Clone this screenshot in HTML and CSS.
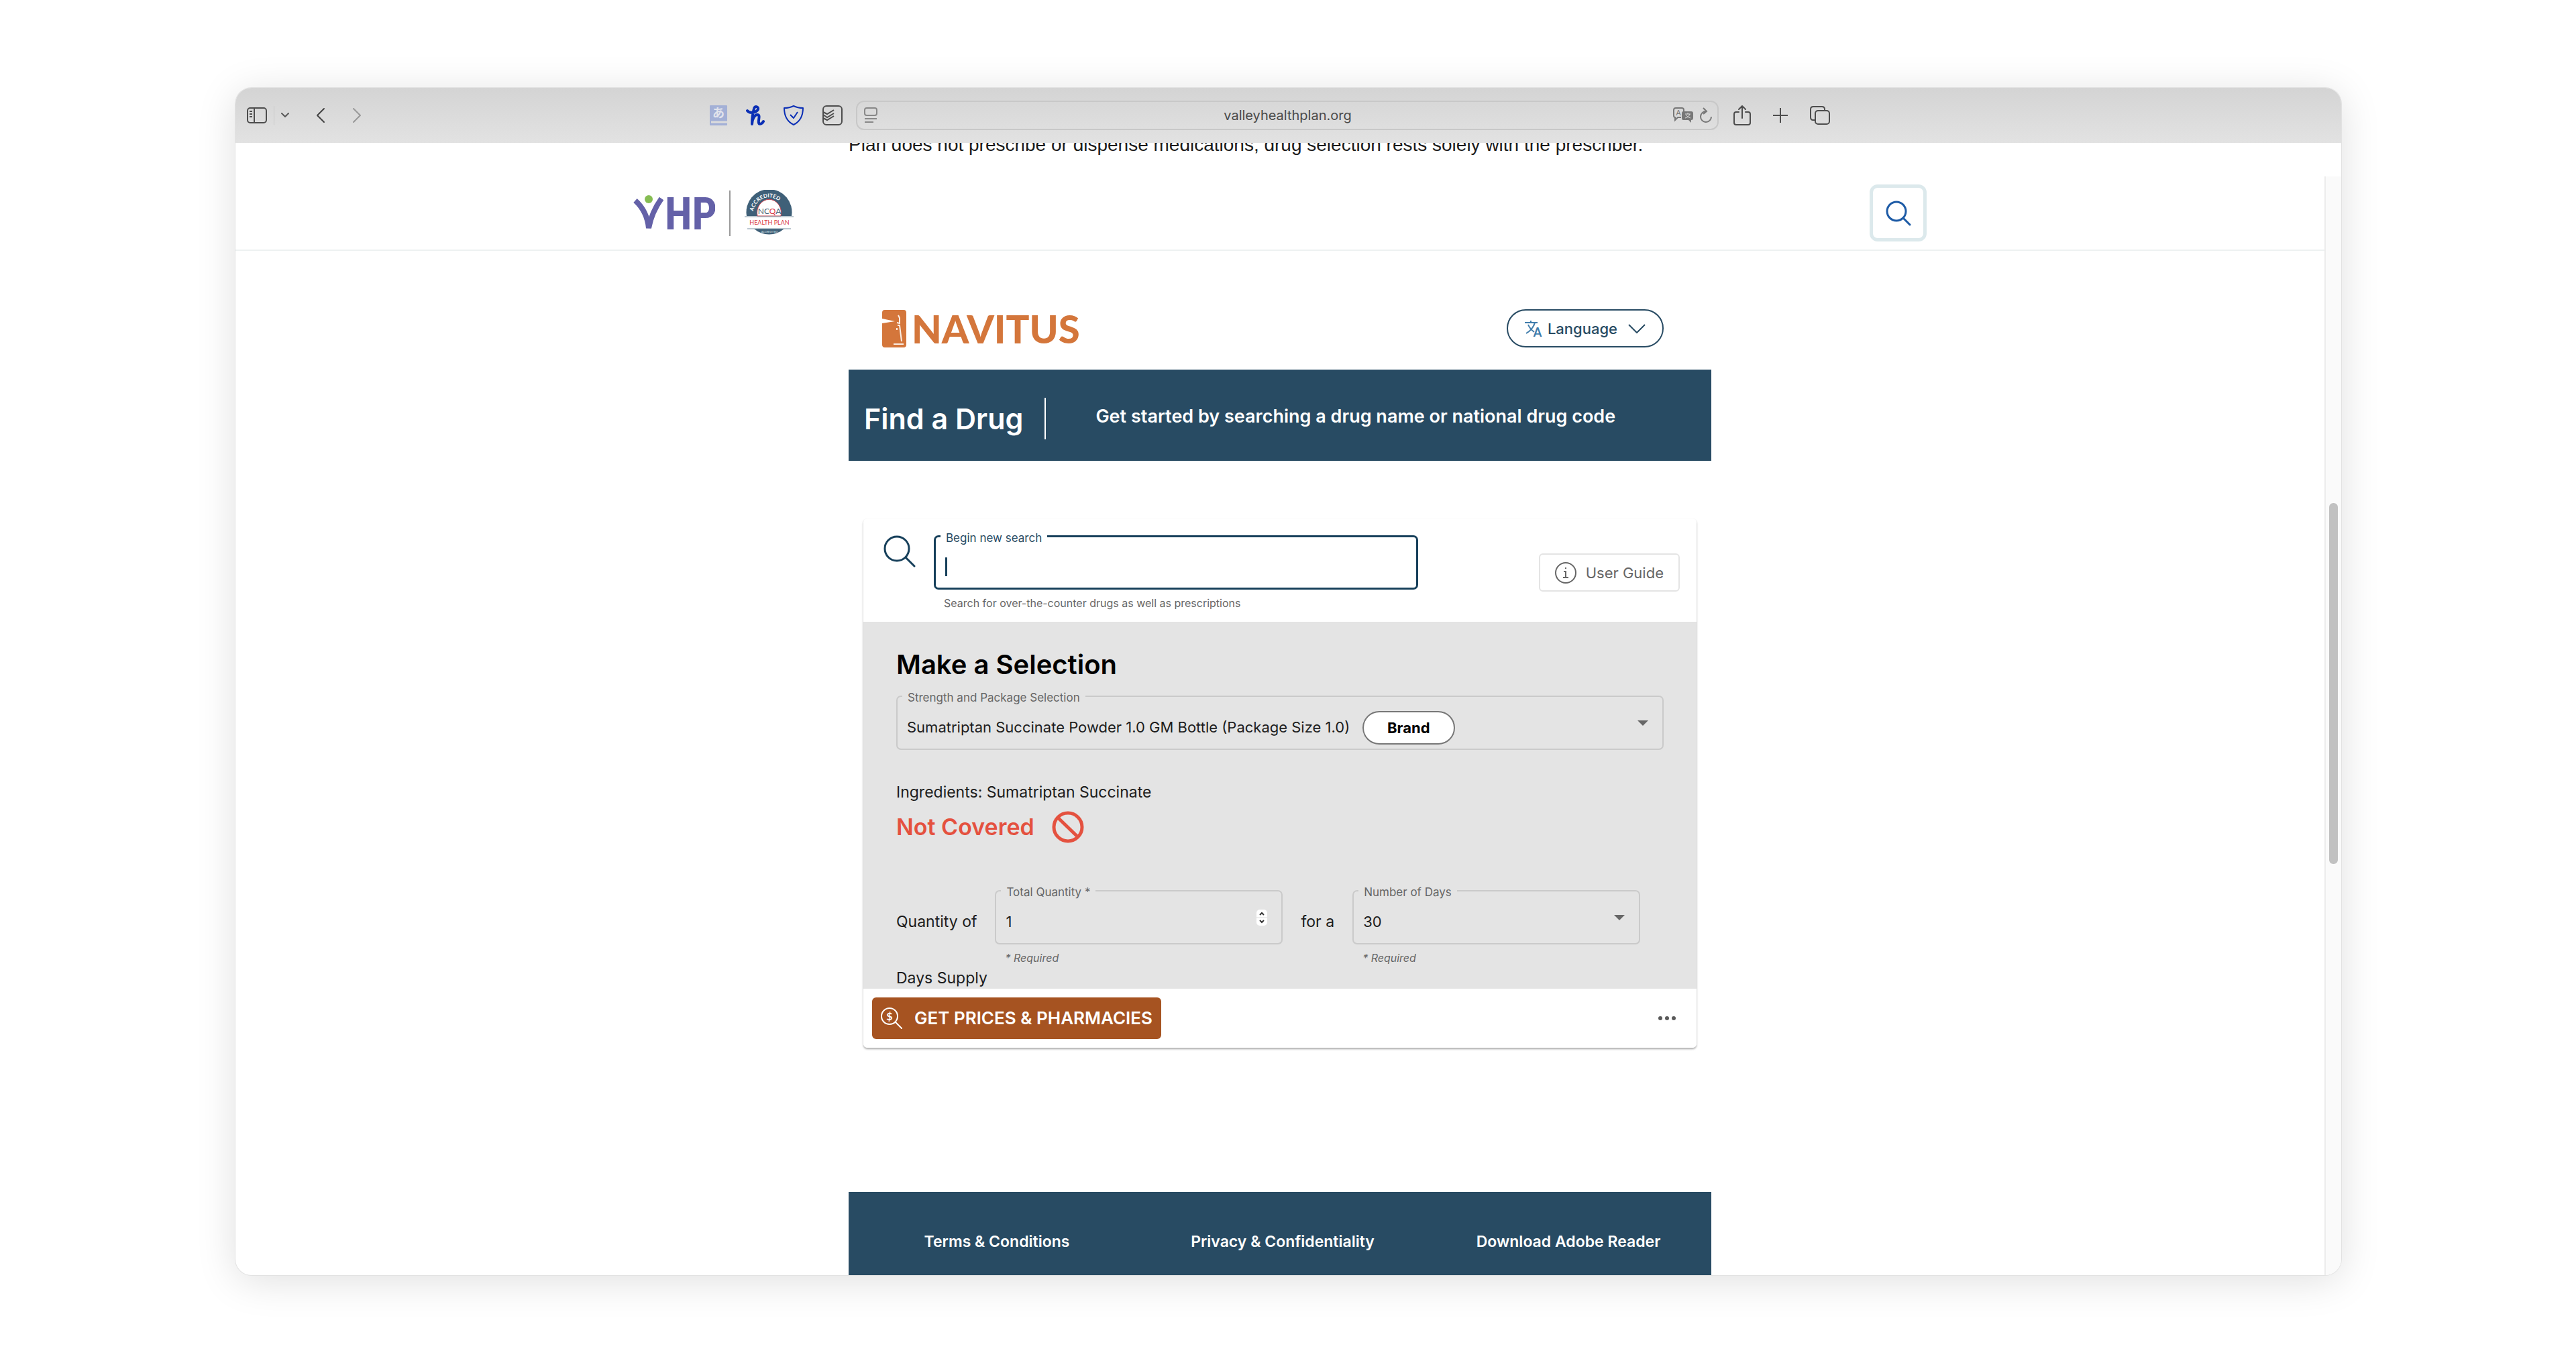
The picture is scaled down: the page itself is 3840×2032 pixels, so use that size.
FILE: index.html
```html
<!DOCTYPE html>
<html lang="en">
<head>
    <meta charset="UTF-8">
    <meta name="viewport" content="width=device-width, initial-scale=1.0">
    <title>Find a Drug</title>
    <link rel="stylesheet" href="styles.css">
</head>
<body>
    <div class="window">
        <!-- Browser toolbar -->
        <div class="toolbar">
            <div class="toolbar-side">
                <button type="button" aria-label="Sidebar">
                    <svg width="30" height="24" viewBox="0 0 30 24" fill="none" stroke="#4d4d4d" stroke-width="2">
                        <rect x="1" y="1" width="28" height="22" rx="4"/>
                        <path d="M11 1v22M4 6h4M4 10h4M4 14h4"/>
                    </svg>
                </button>
                <span class="toolbar-line"></span>
                <button type="button" aria-label="Tab groups">
                    <svg width="12" height="8" viewBox="0 0 12 8" fill="none" stroke="#5a5a5a" stroke-width="2" stroke-linecap="round" stroke-linejoin="round"><path d="M1 1l5 5 5-5"/></svg>
                </button>
                <button type="button" class="back" aria-label="Back">
                    <svg width="14" height="24" viewBox="0 0 14 24" fill="none" stroke="#444" stroke-width="2" stroke-linecap="round" stroke-linejoin="round"><path d="M12 2L2 12l10 10"/></svg>
                </button>
                <button type="button" class="forward" aria-label="Forward">
                    <svg width="14" height="24" viewBox="0 0 14 24" fill="none" stroke="#999" stroke-width="2" stroke-linecap="round" stroke-linejoin="round"><path d="M2 2l10 10L2 22"/></svg>
                </button>
            </div>

            <div class="toolbar-center">
                <div class="extensions">
                    <button type="button" aria-label="Translate extension">
                        <svg width="26" height="30" viewBox="0 0 26 30">
                            <rect width="26" height="30" rx="1" fill="#a3b0d6"/>
                            <path d="M2 25h24" stroke="#dcdcdc" stroke-width="3"/>
                            <text x="13" y="18" class="kana" text-anchor="middle">あ</text>
                        </svg>
                    </button>
                    <button type="button" aria-label="Coupons extension">
                        <svg width="28" height="30" viewBox="0 0 28 30" fill="none" stroke="#0b2fb5" stroke-width="4" stroke-linecap="round" stroke-linejoin="round">
                            <path d="M2 8c3 4 13 4 16-2 1-4-5-6-6-1C10 12 9 20 9 28c0-7 4-14 8-14 5 0 1 8 2 12 1 3 5 2 7-2"/>
                        </svg>
                    </button>
                    <button type="button" aria-label="Privacy extension">
                        <svg width="30" height="30" viewBox="0 0 30 30" fill="none" stroke="#0b2fb5" stroke-width="2" stroke-linejoin="round">
                            <path d="M15 1c4 2 9 3 14 3 0 12-4 20-14 25C5 24 1 16 1 4c5 0 10-1 14-3z"/>
                            <path d="M10 14l5 5 6-9"/>
                        </svg>
                    </button>
                    <button type="button" aria-label="Tasks extension">
                        <svg width="30" height="30" viewBox="0 0 30 30" fill="none" stroke="#4d4d4d" stroke-width="2">
                            <rect x="1" y="1" width="28" height="28" rx="5"/>
                            <path d="M1 10l6 3 10-6M1 14l6 4 10-6M1 19l6 3 10-6"/>
                        </svg>
                    </button>
                </div>
                <div class="url-bar">
                    <svg width="20" height="24" viewBox="0 0 20 24" fill="none" stroke="#888" stroke-width="2">
                        <rect x="1" y="1" width="18" height="11" rx="3"/>
                        <path d="M1 17h18M1 22h13"/>
                    </svg>
                    <input type="text" value="valleyhealthplan.org" aria-label="Address">
                    <svg width="58" height="24" viewBox="0 0 58 24" fill="none" stroke="#777" stroke-width="2">
                        <path d="M12 15H7l-4 4v-4c-1 0-2-1-2-3V4c0-2 1-3 3-3h9c2 0 3 1 3 3v2"/>
                        <path d="M15 6h12c2 0 3 1 3 3v7c0 2-1 3-3 3v4l-4-4h-8c-1 0-2-1-2-3V9c0-2 1-3 2-3z" fill="#777" stroke="none"/>
                        <text x="8" y="12" class="icon-letter">A</text>
                        <path d="M18 10h8M22 8v2M25 10c-1 3-3 5-7 6M19 11c2 3 4 4 7 5" stroke="#ddd" stroke-width="1"/>
                        <path d="M49 6a8 8 0 1 0 8 8M45 1l5 5-5 4"/>
                    </svg>
                </div>
                <div class="page-tools">
                    <button type="button" aria-label="Share">
                        <svg width="26" height="30" viewBox="0 0 26 30" fill="none" stroke="#4d4d4d" stroke-width="2" stroke-linecap="round" stroke-linejoin="round"><path d="M8 10H4c-2 0-3 1-3 3v13c0 2 1 3 3 3h18c2 0 3-1 3-3V13c0-2-1-3-3-3h-4M13 19V1M8 6l5-5 5 5"/></svg>
                    </button>
                    <button type="button" aria-label="New tab">
                        <svg width="22" height="22" viewBox="0 0 22 22" fill="none" stroke="#4d4d4d" stroke-width="2"><path d="M11 0v22M0 11h22"/></svg>
                    </button>
                    <button type="button" aria-label="Show tabs">
                        <svg width="30" height="28" viewBox="0 0 30 28" fill="none" stroke="#4d4d4d" stroke-width="2">
                            <rect x="8" y="7" width="21" height="20" rx="4"/>
                            <path d="M8 21H5c-3 0-4-1-4-4V5c0-3 1-4 4-4h13c3 0 4 1 4 4v2"/>
                        </svg>
                    </button>
                </div>
            </div>
            <div class="toolbar-side"></div>
        </div>

        <div class="viewport">
            <div class="page">
                <div class="notice">
                    <p>Plan does not prescribe or dispense medications; drug selection rests solely with the prescriber.</p>
                </div>

                <!-- Site header -->
                <header class="site-header">
                    <div class="site-header-inner">
                        <a href="#" class="logos" aria-label="VHP home">
                            <svg width="122" height="54" viewBox="0 0 122 54">
                                <path d="M3 8C13 17 21 29 23 49C26 33 32 19 42 5" fill="none" stroke="#6461a8" stroke-width="8" stroke-linejoin="bevel"/>
                                <circle cx="23" cy="6" r="6" fill="#86bd53"/>
                                <text x="47" y="51" class="vhp-text">HP</text>
                            </svg>
                            <span class="logo-line"></span>
                            <svg width="74" height="70" viewBox="0 0 74 70">
                                <path d="M3 39a34 34 0 1 1 67 0z" fill="#3f6078"/>
                                <path d="M19 39a18 20 0 1 1 35 0z" fill="#fff" stroke="#c9434f" stroke-width="1"/>
                                <path d="M14 58h45a34 34 0 0 1-45 0z" fill="#3f6078"/>
                                <path d="M0 40h73M4 58h65" stroke="#7890a0" stroke-width="1"/>
                                <path id="arc" d="M13 32a24 26 0 0 1 47 0" fill="none"/>
                                <text class="badge-arc"><textPath href="#arc">ACCREDITED</textPath></text>
                                <text x="37" y="36" class="badge-ncqa" text-anchor="middle">NC<tspan class="badge-q">Q</tspan>A</text>
                                <text x="37" y="52" class="badge-plan" text-anchor="middle">HEALTH PLAN</text>
                                <text x="37" y="64" class="badge-small" text-anchor="middle">ACCREDITED</text>
                            </svg>
                        </a>
                        <button type="button" class="site-search" aria-label="Search">
                            <svg width="38" height="38" viewBox="0 0 38 38" fill="none" stroke="#1d5ba6" stroke-width="3" stroke-linecap="round"><circle cx="16" cy="16" r="14"/><path d="M26 26l10 10"/></svg>
                        </button>
                    </div>
                </header>

                <!-- Drug search -->
                <main class="drug-app">
                    <div class="brand-row">
                        <div class="navitus">
                            <svg width="36" height="56" viewBox="0 0 36 56">
                                <path d="M4 0h28c3 0 4 2 4 4v48c0 2-1 4-4 4H4c-3 0-4-2-4-4V20l19-3L0 13V4c0-2 1-4 4-4z" fill="#d4763b"/>
                                <path d="M24 8l2 4v8l-4-1M23 23h3l3 24M17 51h15M22 27v3" fill="none" stroke="#fbeee5" stroke-width="2"/>
                            </svg>
                            <span>NAVITUS</span>
                        </div>
                        <button type="button" class="language">
                            <svg width="26" height="26" viewBox="0 0 26 26" fill="none" stroke="#3f7cab" stroke-width="2">
                                <path d="M0 4h19M9 1v3M15 4c-2 7-6 12-13 16M5 7c2 5 5 8 9 11"/>
                                <text x="19" y="25" class="lang-letter" text-anchor="middle">A</text>
                            </svg>
                            Language
                            <svg class="chevron" width="26" height="14" viewBox="0 0 26 14" fill="none" stroke="#284b63" stroke-width="2"><path d="M1 1l12 12L25 1"/></svg>
                        </button>
                    </div>

                    <div class="banner">
                        <h1>Find a Drug</h1>
                        <p>Get started by searching a drug name or national drug code</p>
                    </div>

                    <div class="card">
                        <div class="card-search">
                            <svg class="big-search" width="48" height="48" viewBox="0 0 48 48" fill="none" stroke="#17405b" stroke-width="3" stroke-linecap="round"><circle cx="20" cy="20" r="18"/><path d="M33 33l13 13"/></svg>
                            <div class="search-field">
                                <div class="field field-focus">
                                    <label for="drugSearch">Begin new search</label>
                                    <span class="cursor"></span>
                                    <input type="text" id="drugSearch">
                                </div>
                                <p class="hint">Search for over-the-counter drugs as well as prescriptions</p>
                            </div>
                            <button type="button" class="user-guide">
                                <svg width="32" height="32" viewBox="0 0 32 32" fill="none" stroke="#666" stroke-width="2">
                                    <circle cx="16" cy="16" r="15"/>
                                    <path d="M13 14h3v9M12 23h8M15 9h2"/>
                                </svg>
                                User Guide
                            </button>
                        </div>

                        <div class="selection">
                            <h2>Make a Selection</h2>
                            <div class="field">
                                <label for="package">Strength and Package Selection</label>
                                <select id="package">
                                    <option>Sumatriptan Succinate Powder 1.0 GM Bottle (Package Size 1.0)</option>
                                </select>
                                <span class="pill">Brand</span>
                                <span class="arrow"></span>
                            </div>

                            <p class="ingredients">Ingredients: Sumatriptan Succinate</p>
                            <div class="coverage">
                                <span>Not Covered</span>
                                <svg width="48" height="48" viewBox="0 0 48 48" fill="none" stroke="#e4513f" stroke-width="5"><circle cx="24" cy="24" r="21"/><path d="M9 10l30 29"/></svg>
                            </div>

                            <div class="quantity">
                                <span class="quantity-text">Quantity of</span>
                                <div class="quantity-field">
                                    <div class="field">
                                        <label for="totalQuantity">Total Quantity *</label>
                                        <input type="number" id="totalQuantity" value="1">
                                        <svg class="spinner" width="16" height="24" viewBox="0 0 16 24" fill="none" stroke="#333" stroke-width="2">
                                            <rect x="0" y="0" width="16" height="24" rx="5" fill="#fff" stroke="none"/>
                                            <path d="M0 12h16" stroke="#ddd" stroke-width="1"/>
                                            <path d="M5 8l3-3 3 3M5 16l3 3 3-3"/>
                                        </svg>
                                    </div>
                                    <p class="hint required">* Required</p>
                                </div>
                                <span class="quantity-text">for a</span>
                                <div class="quantity-field">
                                    <div class="field">
                                        <label for="days">Number of Days</label>
                                        <select id="days">
                                            <option>30</option>
                                        </select>
                                        <span class="arrow"></span>
                                    </div>
                                    <p class="hint required">* Required</p>
                                </div>
                            </div>
                            <p class="days-supply">Days Supply</p>
                        </div>

                        <div class="card-footer">
                            <button type="button" class="prices">
                                <svg width="32" height="32" viewBox="0 0 32 32" fill="none" stroke="#fff" stroke-width="2" stroke-linecap="round">
                                    <circle cx="13" cy="13" r="12"/>
                                    <path d="M22 22l9 9"/>
                                    <text x="13" y="19" class="dollar" text-anchor="middle">$</text>
                                </svg>
                                GET PRICES &amp; PHARMACIES
                            </button>
                            <button type="button" class="more" aria-label="More">
                                <svg width="28" height="8" viewBox="0 0 28 8" fill="#5a5a5a"><circle cx="4" cy="4" r="3"/><circle cx="14" cy="4" r="3"/><circle cx="24" cy="4" r="3"/></svg>
                            </button>
                        </div>
                    </div>

                    <footer class="links">
                        <a href="#">Terms &amp; Conditions</a>
                        <a href="#">Privacy &amp; Confidentiality</a>
                        <a href="#">Download Adobe Reader</a>
                    </footer>
                </main>
            </div>
            <div class="scrollbar">
                <div class="thumb"></div>
            </div>
        </div>
    </div>
</body>
</html>
```
FILE: styles.css
```css
* {
    box-sizing: border-box;
}

body {
    margin: 0;
    height: 100vh;
    padding: 131px 350px 131px 351px;
    display: flex;
    background-color: #fff;
    font-family: Inter, "Open Sans", sans-serif;
    font-size: 23px;
    line-height: 28px;
    color: #1c1c1c;
}

h1, h2, p {
    margin: 0;
}

button, input, select {
    font: inherit;
    color: inherit;
    border: none;
    background: none;
    margin: 0;
    padding: 0;
}

button {
    display: flex;
    align-items: center;
    cursor: pointer;
}

svg {
    display: block;
    flex: none;
}

.window {
    flex: 1;
    display: flex;
    flex-direction: column;
    min-width: 0;
    background-color: #fff;
    border-radius: 24px;
    overflow: hidden;
    box-shadow: 0 0 0 1px #e2e2e2, 0 8px 60px rgba(0, 0, 0, 0.13);
}

/* Browser toolbar */
.toolbar {
    flex: none;
    height: 82px;
    display: flex;
    align-items: center;
    padding-right: 56px;
    background: linear-gradient(#d4d4d4, #e2e2e2);
}

.toolbar-side {
    flex: 1;
    display: flex;
    align-items: center;
    padding-left: 17px;
    gap: 10px;
}

.toolbar-line {
    width: 1px;
    height: 28px;
    background-color: #c8c8c8;
}

.back {
    margin-left: 30px;
}

.forward {
    margin-left: 30px;
}

.toolbar-center {
    width: 1670px;
    display: flex;
    align-items: center;
}

.extensions {
    width: 218px;
    padding-right: 20px;
    display: flex;
    justify-content: space-between;
}

.url-bar {
    flex: 1;
    height: 44px;
    display: flex;
    align-items: center;
    padding: 0 8px 0 10px;
    border: 2px solid #c8c8c8;
    border-radius: 12px;
}

.url-bar input {
    flex: 1;
    min-width: 0;
    padding-left: 38px;
    text-align: center;
    font-size: 20px;
    color: #4a4a4a;
}

.page-tools {
    width: 166px;
    padding-left: 22px;
    display: flex;
    align-items: center;
    justify-content: space-between;
}

.kana {
    font: 700 18px "Noto Sans CJK JP", sans-serif;
    fill: #e2e4ec;
}

.icon-letter {
    font: 11px Inter, sans-serif;
    fill: #777;
    stroke: none;
    text-anchor: middle;
}

/* Page area */
.viewport {
    flex: 1;
    min-height: 0;
    display: flex;
}

.page {
    flex: 1;
    display: flex;
    flex-direction: column;
}

.notice {
    flex: none;
    width: 1286px;
    height: 18px;
    margin: 0 auto 32px;
    display: flex;
    align-items: flex-end;
    overflow: hidden;
}

.notice p {
    font-family: "Liberation Sans", Arial, sans-serif;
    font-size: 28px;
    line-height: 30px;
    white-space: nowrap;
}

.scrollbar {
    width: 25px;
    margin-top: 50px;
    padding: 487px 5px 0;
    background-color: #fafafa;
    border-left: 2px solid #ececec;
}

.thumb {
    height: 538px;
    border-radius: 6px;
    background-color: #c1c1c1;
}

.site-header {
    flex: none;
    border-bottom: 2px solid #edf1f1;
}

.site-header-inner {
    max-width: 1928px;
    height: 109px;
    margin: 0 auto;
    display: flex;
    align-items: center;
    justify-content: space-between;
}

.logos {
    display: flex;
    align-items: center;
    gap: 21px;
}

.logo-line {
    width: 2px;
    height: 68px;
    background-color: #999;
}

.vhp-text {
    font: 700 66px "Liberation Sans Narrow", "Roboto Condensed", sans-serif;
    fill: #6461a8;
}

.badge-arc {
    font: 700 8px Lato, sans-serif;
    fill: #fff;
}

.badge-ncqa {
    font: 12px Lato, sans-serif;
    fill: #3f6078;
}

.badge-q {
    fill: #d8333f;
}

.badge-plan {
    font: 9px Lato, sans-serif;
    fill: #d8333f;
}

.badge-small {
    font: 4px Lato, sans-serif;
    fill: #dde4e9;
}

.site-search {
    width: 85px;
    height: 85px;
    justify-content: center;
    border: 5px solid #dce9ec;
    border-radius: 12px;
}

/* Drug search */
.drug-app {
    flex: 1;
    width: 1286px;
    margin: 0 auto;
    display: flex;
    flex-direction: column;
}

.brand-row {
    display: flex;
    align-items: center;
    justify-content: space-between;
    padding: 87px 71px 33px 50px;
}

.navitus {
    display: flex;
    align-items: center;
    gap: 8px;
    color: #d4763b;
    font-family: Lato, sans-serif;
    font-size: 58px;
    line-height: 54px;
    font-weight: 900;
}

.language {
    height: 57px;
    padding: 0 25px;
    gap: 8px;
    border: 2px solid #284b63;
    border-radius: 30px;
    color: #284b63;
    font-size: 22px;
    font-weight: 500;
}

.chevron {
    margin-left: 8px;
}

.lang-letter {
    font: 700 18px Lato, sans-serif;
    fill: #3f7cab;
    stroke: none;
}

.banner {
    height: 136px;
    display: flex;
    align-items: center;
    padding: 10px 0 0 23px;
    background-color: #284b63;
    color: #fff;
}

.banner h1 {
    padding-right: 32px;
    border-right: 2px solid #fff;
    font-size: 43px;
    line-height: 62px;
    font-weight: 600;
}

.banner p {
    padding: 0 0 6px 74px;
    font-size: 27px;
    font-weight: 600;
}

.card {
    margin: 86px 22px 215px;
    border-radius: 6px;
    overflow: hidden;
    box-shadow: 0 2px 3px rgba(0, 0, 0, 0.35);
}

.card-search {
    height: 154px;
    display: flex;
    align-items: flex-start;
    padding: 25px 25px 0 30px;
}

.search-field {
    width: 722px;
    margin-left: 27px;
}

/* Outlined field with its label on the border */
.field {
    position: relative;
    height: 81px;
    display: flex;
    align-items: center;
    padding: 0 21px 0 14px;
    border: 2px solid #cacaca;
    border-radius: 7px;
    font-size: 22px;
}

.field label {
    position: absolute;
    top: -9px;
    left: 7px;
    padding: 0 8px;
    background-color: #e4e4e4;
    color: #666;
    font-size: 17px;
    line-height: 20px;
}

.field input {
    flex: 1;
    min-width: 0;
}

.field select {
    appearance: none;
    padding-top: 12px;
}

.field-focus {
    border: 3px solid #17405b;
}

.field-focus label {
    background-color: #fff;
    color: #284b63;
}

.field-focus input {
    outline: none;
    caret-color: transparent;
}

.cursor {
    width: 3px;
    height: 28px;
    margin-top: 12px;
    background-color: #17405b;
}

.hint {
    margin-top: 10px;
    padding-left: 15px;
    color: #666;
    font-size: 16px;
    line-height: 20px;
}

.user-guide {
    height: 57px;
    margin: 27px 0 0 auto;
    padding: 0 22px;
    gap: 14px;
    border: 2px solid #e4e4e4;
    border-radius: 6px;
    color: #666;
    font-size: 22px;
}

.selection {
    padding: 41px 49px 2px;
    background-color: #e4e4e4;
}

.selection h2 {
    margin-bottom: 23px;
    font-size: 40px;
    line-height: 46px;
    font-weight: 600;
    color: #000;
}

.pill {
    height: 50px;
    margin: 15px 0 0 18px;
    padding: 0 35px;
    display: flex;
    align-items: center;
    border: 2px solid #777;
    border-radius: 25px;
    background-color: #fff;
    color: #000;
    font-weight: 700;
}

.arrow {
    margin-left: auto;
    border: 8px solid transparent;
    border-top-color: #666;
    border-bottom: none;
}

.ingredients {
    margin-top: 49px;
}

.coverage {
    display: flex;
    align-items: center;
    gap: 26px;
    margin-top: 14px;
    color: #e4513f;
    font-size: 34px;
    font-weight: 600;
}

.quantity {
    display: flex;
    gap: 27px;
    margin-top: 70px;
}

.quantity-text {
    margin-top: 33px;
}

.quantity-field {
    width: 429px;
}

input[type="number"] {
    appearance: textfield;
    padding-top: 12px;
}

.required {
    font-style: italic;
}

.days-supply {
    margin-top: 6px;
}

.card-footer {
    height: 88px;
    display: flex;
    align-items: center;
    justify-content: space-between;
    padding: 0 30px 0 13px;
    background-color: #fff;
}

.prices {
    height: 62px;
    padding: 0 13px;
    gap: 18px;
    border-radius: 6px;
    background-color: #a65321;
    color: #fff;
    font-size: 26px;
    font-weight: 600;
}

.dollar {
    font: 700 16px Lato, sans-serif;
    fill: #fff;
    stroke: none;
}

.links {
    flex: 1;
    display: grid;
    grid-template-columns: repeat(3, 1fr);
    padding: 60px 0 0 8px;
    background-color: #284b63;
}

.links a {
    height: 28px;
    text-align: center;
    color: #fff;
    font-weight: 600;
    text-decoration: none;
}
```
